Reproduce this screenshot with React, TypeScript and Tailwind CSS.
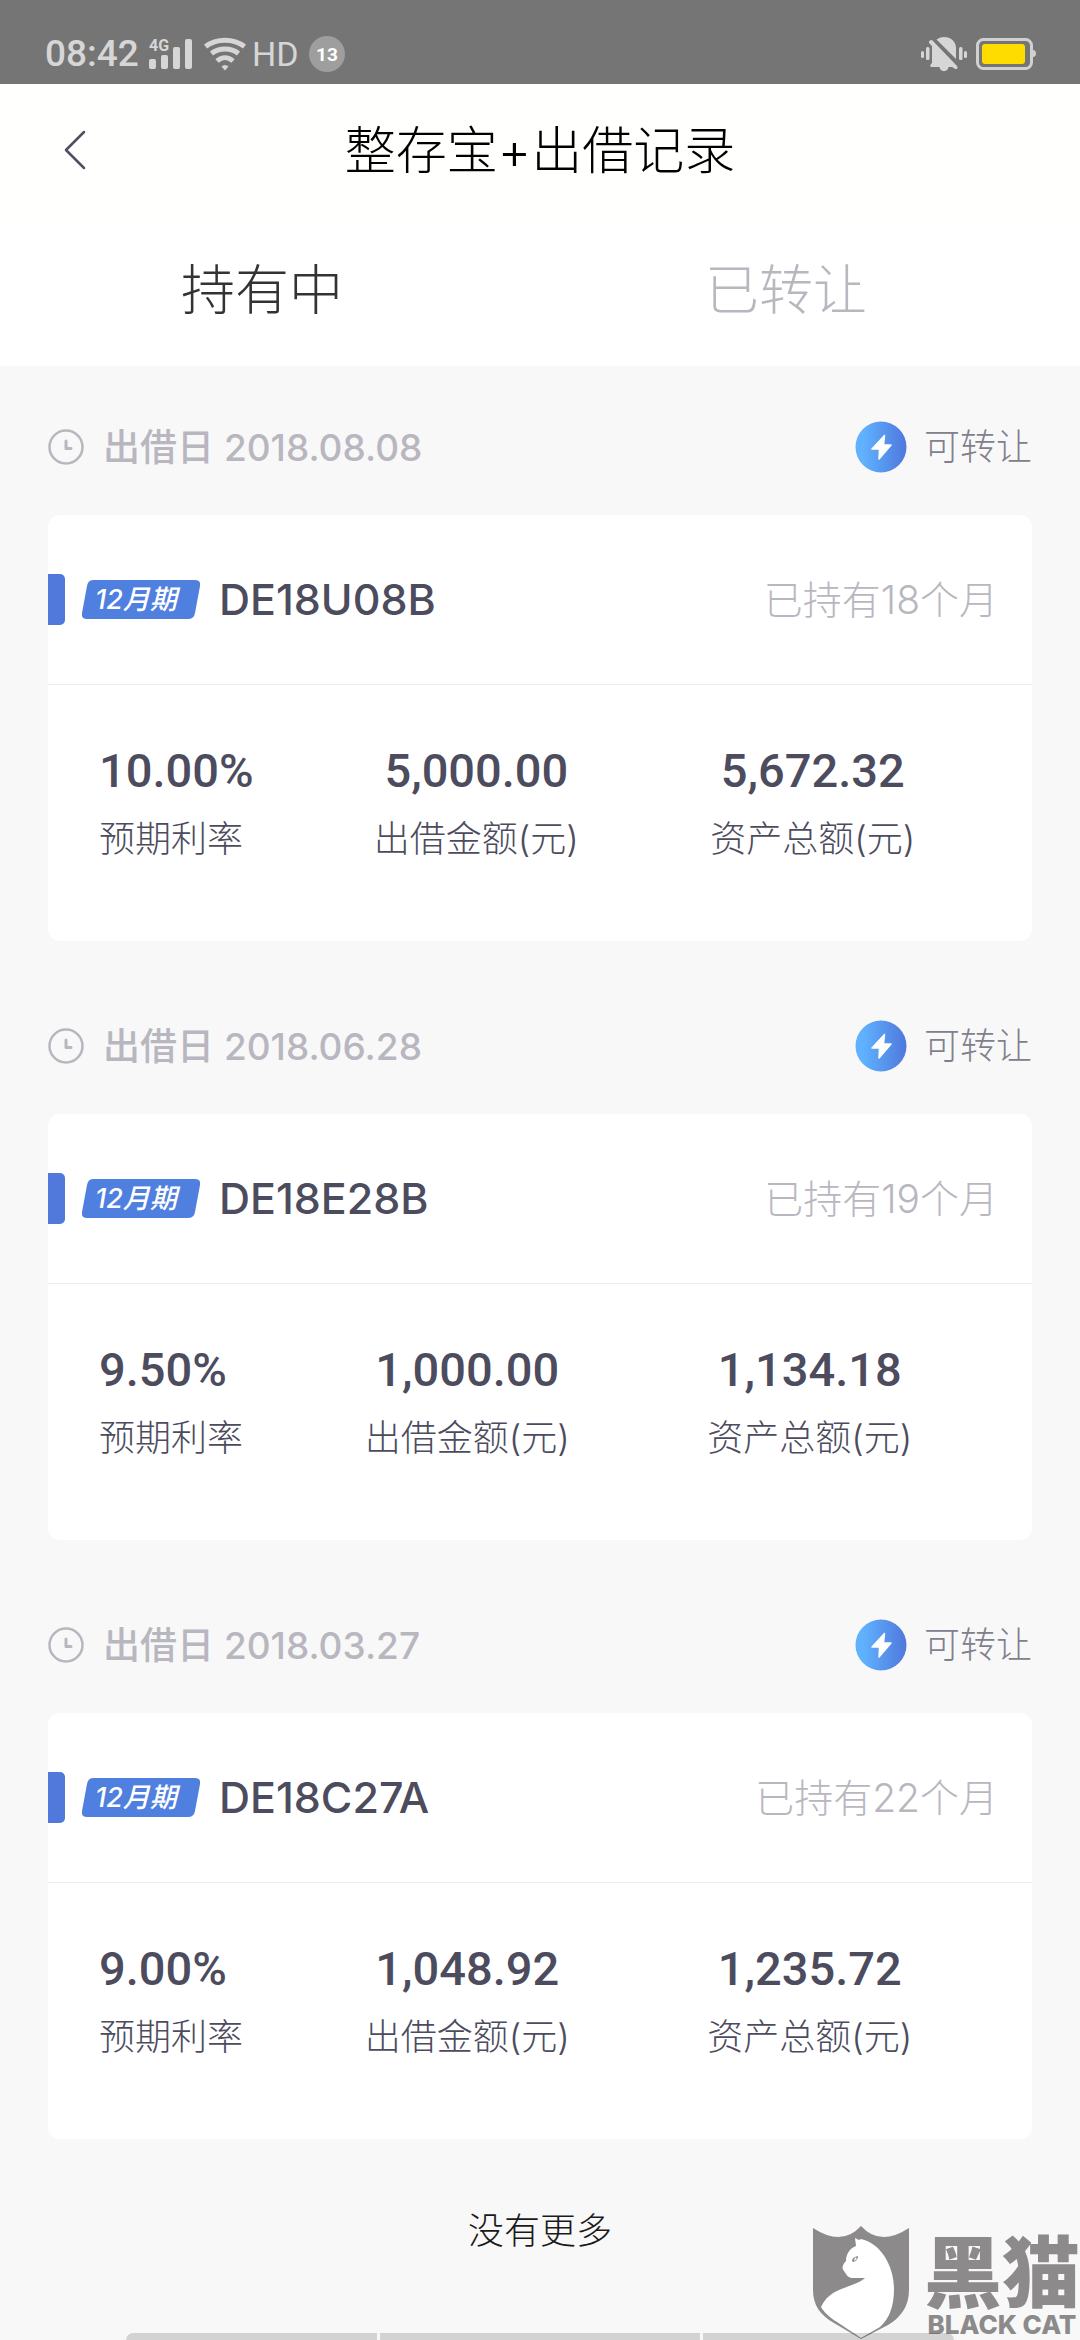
type LoanRecord = {
  date: string;
  term: string;
  code: string;
  held: string;
  rate: string;
  amount: string;
  total: string;
  columns: string;
};

const records: LoanRecord[] = [
  {
    date: "2018.08.08",
    term: "12月期",
    code: "DE18U08B",
    held: "已持有18个月",
    rate: "10.00%",
    amount: "5,000.00",
    total: "5,672.32",
    columns: "grid-cols-[157fr_203fr_203fr]",
  },
  {
    date: "2018.06.28",
    term: "12月期",
    code: "DE18E28B",
    held: "已持有19个月",
    rate: "9.50%",
    amount: "1,000.00",
    total: "1,134.18",
    columns: "grid-cols-[147fr_203fr_203fr]",
  },
  {
    date: "2018.03.27",
    term: "12月期",
    code: "DE18C27A",
    held: "已持有22个月",
    rate: "9.00%",
    amount: "1,048.92",
    total: "1,235.72",
    columns: "grid-cols-[147fr_203fr_203fr]",
  },
];

function SignalIcon() {
  return (
    <svg width="44" height="44" viewBox="0 -6 44 44" fill="#d6d6d6" aria-hidden="true">
      <text x="0" y="13" fontSize="16" fontWeight="700" fontFamily="Roboto, sans-serif">
        4G
      </text>
      <rect x="0" y="21" width="7" height="10" rx="2" />
      <rect x="12" y="17" width="7" height="14" rx="2" />
      <rect x="24" y="9" width="7" height="22" rx="2" />
      <rect x="36" y="1" width="7" height="30" rx="2" />
    </svg>
  );
}

function WifiIcon() {
  return (
    <svg width="42" height="34" viewBox="0 0 42 34" fill="none" stroke="#d6d6d6" strokeWidth="5" aria-hidden="true">
      <path d="M1.5 9.5C12.5 1 29.5 1 40.5 9.5" />
      <path d="M7.5 16.5C15 10.500 27 10.500 34.5 16.5" />
      <path d="M13 24C18 19.500 24 19.500 29 24" />
      <path d="M17.5 29.5Q21 26.5 24.5 29.5L21 33.500Z" fill="#d6d6d6" stroke="none" />
    </svg>
  );
}

function MuteIcon() {
  return (
    <svg width="47" height="36" viewBox="0 0 47 36" fill="#d6d6d6" aria-hidden="true">
      <rect x="0" y="15" width="3" height="7" rx="1.5" />
      <rect x="5" y="11" width="3.5" height="13" rx="1.5" />
      <rect x="38" y="11" width="3.5" height="13" rx="1.5" />
      <rect x="43" y="15" width="3" height="7" rx="1.5" />
      <path d="M15.5 3.5C24 -2.500 35 3 35 12V23Z" />
      <path d="M9 4.5C10 3.5 11 4 12 5L36 30C37.5 32 35.5 34 33.5 32.5L31 31H27.5C27.5 36.5 18.5 36.5 18.5 31H10.500C8.500 31 9 28.5 11 27V10L8.500 7.500C7.500 6.500 8 5 9 4.500Z" />
    </svg>
  );
}

function BatteryIcon() {
  return (
    <svg width="60" height="32" viewBox="0 0 60 32" aria-hidden="true">
      <rect x="1.5" y="1.5" width="54" height="29" rx="6" fill="none" stroke="#d0d0d0" strokeWidth="3" />
      <rect x="6" y="6" width="43" height="20" rx="3" fill="#ffdc00" />
      <path d="M57 12C61 12 61 19 57 19Z" fill="#d0d0d0" />
    </svg>
  );
}

function StatusBar() {
  return (
    <div className="flex h-[84px] items-end justify-between bg-[#757575] pr-[44px] pb-[12px] pl-[45px] font-['Roboto',sans-serif] text-[#d6d6d6]">
      <div className="flex h-9 items-center">
        <span className="w-[104px] text-[37px] leading-9 font-medium">08:42</span>
        <span className="w-[55px]">
          <SignalIcon />
        </span>
        <WifiIcon />
        <span className="ml-[6px] w-[57px] text-[34px] leading-9">HD</span>
        <span className="flex size-9 items-center justify-center rounded-full bg-[#9e9e9e] text-[19px] leading-none font-bold text-white">
          13
        </span>
      </div>
      <div className="flex h-9 items-center gap-[8px]">
        <MuteIcon />
        <BatteryIcon />
      </div>
    </div>
  );
}

function ClockIcon() {
  return (
    <svg width="36" height="36" viewBox="0 0 36 36" fill="none" stroke="#b8b7bf" aria-hidden="true">
      <circle cx="18" cy="18" r="16.5" strokeWidth="2.5" />
      <path d="M18 12V19.5H23" strokeWidth="3" strokeLinecap="round" strokeLinejoin="round" />
    </svg>
  );
}

function BoltIcon() {
  return (
    <svg width="52" height="52" viewBox="0 0 52 52" aria-hidden="true">
      <defs>
        <linearGradient id="bolt" x1="0" y1="0" x2="1" y2="0">
          <stop offset="0.15" stopColor="#60b1fe" />
          <stop offset="1" stopColor="#4f78dc" />
        </linearGradient>
      </defs>
      <circle cx="26" cy="26" r="25.5" fill="url(#bolt)" />
      <path
        d="M29.5 14.5L17 28H24.5L24 38L36 24H28.5Z"
        fill="#fff"
        stroke="#fff"
        strokeWidth="1.5"
        strokeLinejoin="round"
      />
    </svg>
  );
}

function TermTag({ text }: { text: string }) {
  return (
    <span className="relative ml-[17px] flex h-[39px] w-[118px] items-center pl-[13px]">
      <svg className="absolute inset-0 size-full" viewBox="0 0 118 39" aria-hidden="true">
        <path
          d="M11 0H113Q119 0 118 6L113 33Q112 39 106 39H5Q-1 39 0 33L5 6Q6 0 11 0Z"
          fill="#4f7fdf"
        />
      </svg>
      <span className="relative text-[27px] leading-none font-medium text-white italic">{text}</span>
    </span>
  );
}

function Figure({ value, label, className }: { value: string; label: string; className: string }) {
  return (
    <div className={className}>
      <dd className="font-['Roboto',sans-serif] text-[47px] leading-[56px] font-medium">{value}</dd>
      <dt className="mt-[14px] text-[36px] leading-[52px] font-light">{label}</dt>
    </div>
  );
}

function RecordItem({ record }: { record: LoanRecord }) {
  return (
    <li>
      <div className="flex h-[52px] items-center justify-between">
        <div className="flex items-center gap-[19px] text-[37px] leading-none font-medium text-[#b8b7bf]">
          <ClockIcon />
          <span>出借日 {record.date}</span>
        </div>
        <div className="flex items-center gap-[17px] text-[36px] leading-none font-light text-[#817f8e]">
          <BoltIcon />
          <span>可转让</span>
        </div>
      </div>
      <article className="mt-[42px] rounded-xl bg-white text-[#4c4c5e]">
        <div className="flex h-[170px] items-center border-b border-[#ececec] pr-[34px]">
          <span className="h-[51px] w-[17px] rounded-r-[5px] bg-[#5179dc]" />
          <TermTag text={record.term} />
          <h2 className="ml-[19px] text-[43px] leading-none font-medium">{record.code}</h2>
          <span className="ml-auto text-[39px] leading-none font-light text-[#b8b7bf]">{record.held}</span>
        </div>
        <dl className={`grid h-[256px] content-start pt-[58px] pr-[51px] ${record.columns}`}>
          <Figure className="flex flex-col pl-[51px]" value={record.rate} label="预期利率" />
          <Figure className="flex flex-col items-center" value={record.amount} label="出借金额(元)" />
          <Figure className="flex flex-col items-center" value={record.total} label="资产总额(元)" />
        </dl>
      </article>
    </li>
  );
}

function Watermark() {
  return (
    <div className="absolute right-0 bottom-0 flex items-end gap-[14px] text-[#8c8a8a]">
      <svg width="98" height="115" viewBox="0 0 98 115" aria-hidden="true">
        <path
          d="M1 3Q30 22 49 1Q68 22 97 3V65C97 82 88 93 76 100L49 114L22 98C8 90 1 80 1 65Z"
          fill="#8c8a8a"
        />
        <path
          d="M43 13L47 15L49 14C68 18 82 40 82 64C82 82 77 94 68 102L49 113L25 97C17 92 12 87 9 82C17 64 36 63 47 57Q51 55 53 53H40C36 53 34 49 32 46C29 43 31 39 34 36C34 29 38 23 44 21Z"
          fill="#fff"
        />
        <path d="M40 36Q40 32 46 31Q46 36 41 37Z" fill="#8c8a8a" />
        <path d="M43 32L42 36L45 34Z" fill="#fff" />
      </svg>
      <div className="flex flex-col items-center pb-[3px]">
        <span className="text-[78px] leading-[78px] font-black">黑猫</span>
        <span className="text-[26px] leading-[24px] font-extrabold">BLACK CAT</span>
      </div>
    </div>
  );
}

export default function App() {
  return (
    <div className="relative flex min-h-screen flex-col bg-[#f8f8f8] font-['Inter','Noto_Sans_CJK_SC',sans-serif]">
      <StatusBar />
      <header className="grid h-[132px] grid-cols-[1fr_auto_1fr] items-center bg-[#fffffd]">
        <button type="button" aria-label="返回" className="ml-[63px] w-[24px]">
          <svg width="24" height="40" viewBox="0 0 24 40" fill="none" stroke="#4f4e62" strokeWidth="2.5" aria-hidden="true">
            <path d="M21 2L3 20L21 38" strokeLinecap="round" strokeLinejoin="round" />
          </svg>
        </button>
        <h1 className="text-[51px] leading-none font-light text-black">整存宝+出借记录</h1>
      </header>
      <nav className="flex h-[150px] bg-white pr-8 text-[54px] leading-none font-light">
        <button type="button" className="flex-1 text-[#333333]">
          持有中
        </button>
        <button type="button" className="flex-1 text-[#b8b7bf]">
          已转让
        </button>
      </nav>
      <main className="px-[48px] pt-[55px]">
        <ul className="flex flex-col gap-[79px]">
          {records.map((record) => (
            <RecordItem key={record.code} record={record} />
          ))}
        </ul>
        <p className="mt-[66px] text-center text-[36px] leading-[52px] font-light text-[#1a1a1a]">没有更多</p>
      </main>
      <Watermark />
      <div className="relative mx-[126px] mt-auto grid h-[7px] grid-cols-[251fr_320fr_251fr] gap-[3px]">
        <span className="rounded-tl-lg bg-black/15" />
        <span className="bg-black/15" />
        <span className="rounded-tr-lg bg-black/15" />
      </div>
    </div>
  );
}
